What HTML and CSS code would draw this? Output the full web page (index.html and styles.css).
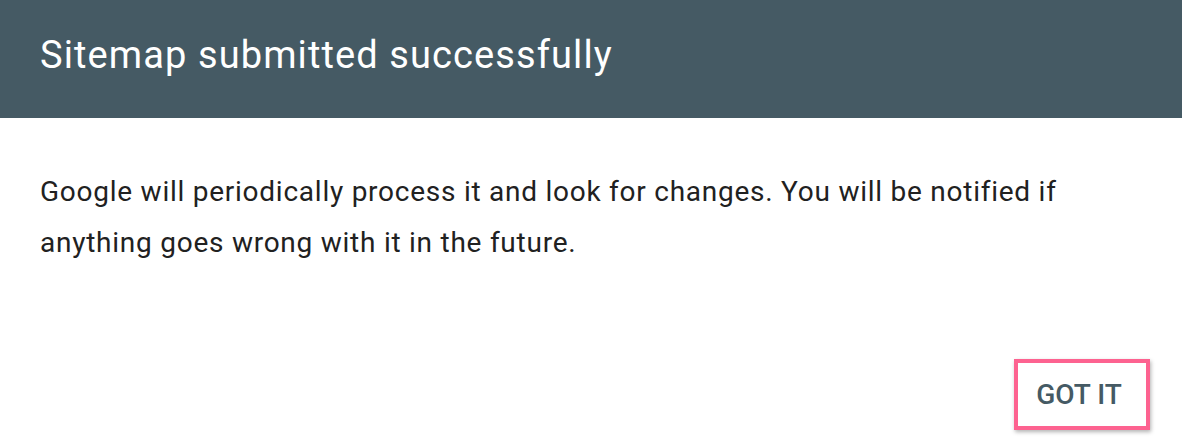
FILE: index.html
```html
<!DOCTYPE html>
<html>
<head>
<meta charset="utf-8">
<link rel="stylesheet" href="styles.css">
</head>
<body>
<div class="dialog">
  <div class="header"><h1 class="title">Sitemap submitted successfully</h1></div>
  <div class="content">
    <p class="message">Google will periodically process it and look for changes. You will be notified if anything goes wrong with it in the future.</p>
  </div>
  <div class="actions">
    <button class="btn">GOT IT</button>
  </div>
</div>
</body>
</html>
```
FILE: styles.css
```css
html, body { margin: 0; padding: 0; background: #fff; }
body { font-family: Roboto, "Liberation Sans", sans-serif; width: 1182px; height: 446px; overflow: hidden; }
.dialog { display: flex; flex-direction: column; height: 446px; }
.header { background: #455a64; height: 118px; display: flex; align-items: center; padding: 0 40px 8px 40px; box-sizing: border-box; }
.title { margin: 0; color: #fff; font-size: 38px; font-weight: 400; line-height: 1; letter-spacing: 1.1px; }
.content { padding: 48px 40px 0 40px; }
.message { margin: 0; color: #212121; font-size: 28px; line-height: 51px; letter-spacing: 0.75px; max-width: 1060px; }
.actions { margin-top: auto; display: flex; justify-content: flex-end; padding: 0 32px 16px 0; }
.btn { font-family: Roboto, "Liberation Sans", sans-serif; font-size: 28px; font-weight: 500; color: #455a64; background: #fff; border: 4px solid #fd6290; width: 136px; height: 71px; box-sizing: border-box; padding: 0 6px 0 0; box-shadow: 1px 2px 4px rgba(0,0,0,0.3); }
```
